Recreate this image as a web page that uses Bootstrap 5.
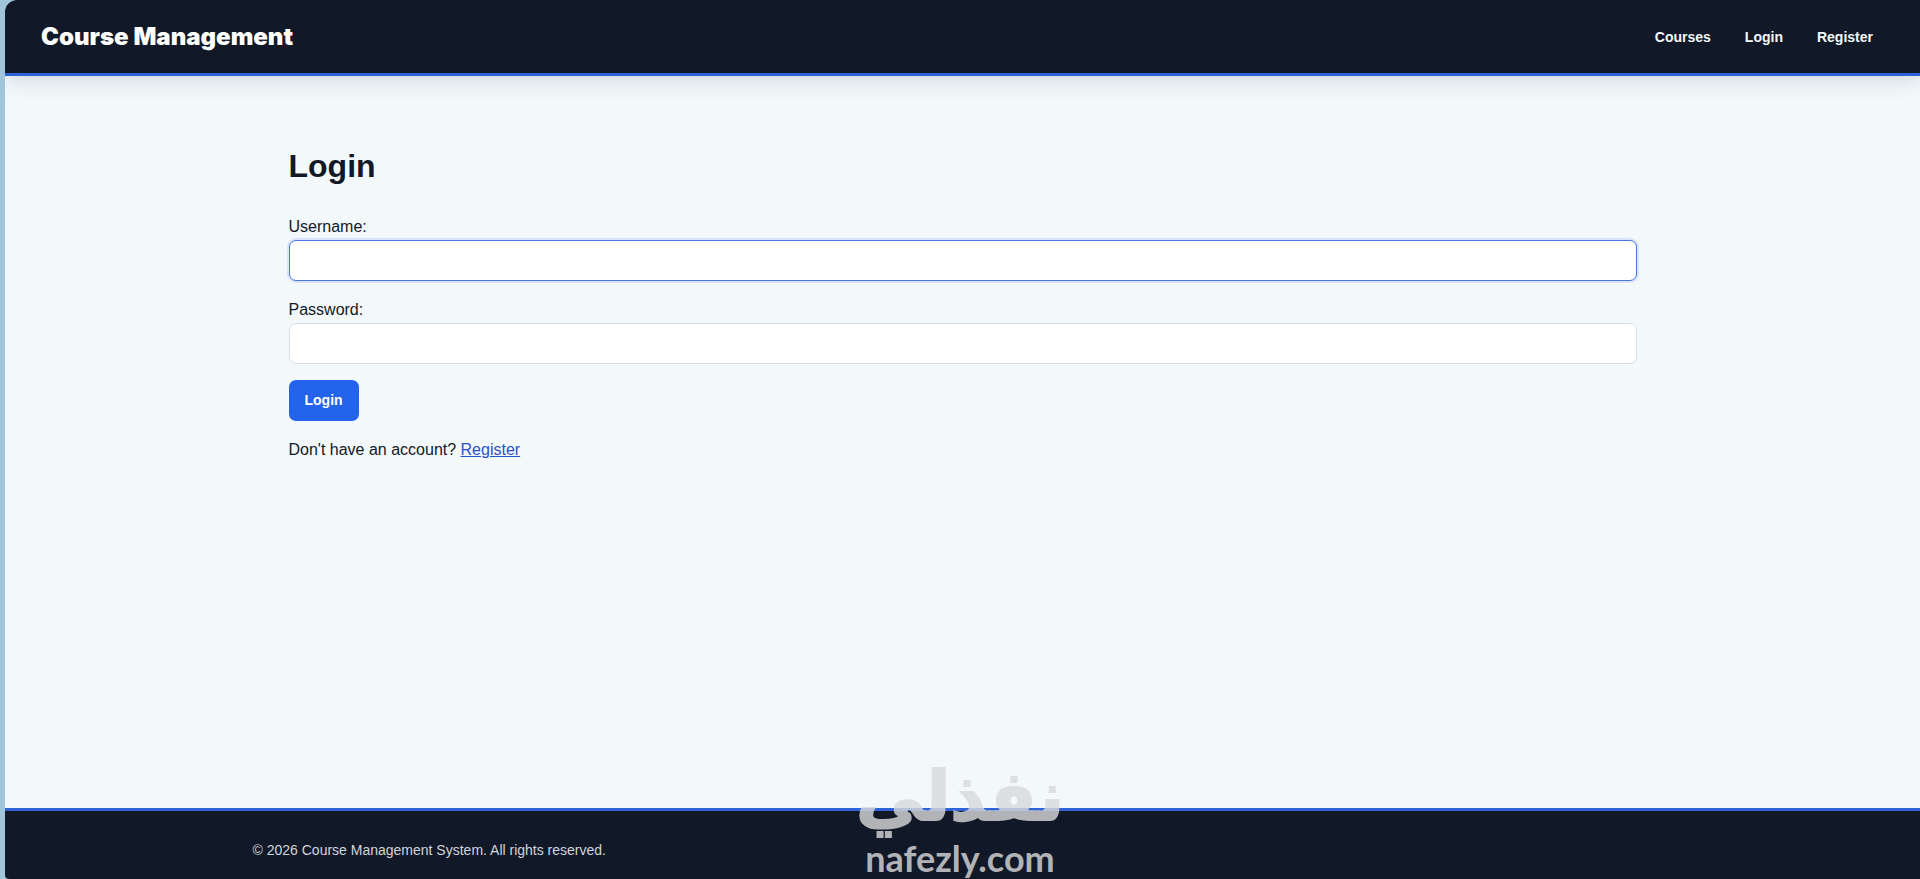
<!DOCTYPE html>
<html lang="en">
<head>
<meta charset="utf-8">
<meta name="viewport" content="width=device-width, initial-scale=1">
<title>Login - Course Management</title>
<link href="https://cdn.jsdelivr.net/npm/bootstrap@5.3.0/dist/css/bootstrap.min.css" rel="stylesheet">
<style>
body { font-family: "Liberation Sans", Arial, sans-serif; font-size: 16px; line-height: 26px; color: #111827; background: #a1c6dc; }
.app-window { min-height: 100vh; margin-left: 5px; background: #f3f8fb; border-radius: 12px 0 0 4px; overflow: hidden; }
.site-header { background: #111827; border-bottom: 3px solid #2f62d4; box-shadow: 0 4px 20px rgba(17, 24, 39, .15); padding: 0 36px; height: 76px; }
.site-brand { font-family: Inter, "Liberation Sans", sans-serif; font-weight: 900; font-size: 24px; line-height: 32px; color: #fff; }
.site-nav { gap: 12px; }
.site-nav .nav-link { font-size: 14px; font-weight: 700; line-height: 24px; color: #f3f8fc; padding: 0 11px; }
.page-box { width: 100%; max-width: 1420px; }
.login-area { padding: 68px 36px 48px; }
.login-title { font-size: 32px; line-height: 44px; font-weight: 700; margin-bottom: 26px; }
.login-field { margin-bottom: 16px; }
.login-field .form-control { height: 41px; border-radius: 7px; border-color: #d9dee5; }
.login-field .form-control.active-field { border-color: #4a78e0; box-shadow: 0 0 0 2px rgba(37, 99, 235, .12); }
.login-btn { font-size: 14px; font-weight: 700; line-height: 25px; padding: 8px 16px; border: 0; border-radius: 7px; background: #2463eb; color: #fff; }
.login-link { color: #2a52c8; }
.site-footer { background: #111827; border-top: 3px solid #2f62d4; padding: 28px 0 18px; font-size: 14px; line-height: 22px; color: #d1d5db; }
.watermark { bottom: 0; left: 0; right: 0; color: rgb(218, 218, 218); opacity: .8; pointer-events: none; }
.watermark-ar { font-family: "DejaVu Sans", sans-serif; font-weight: 700; font-size: 68px; line-height: 80px; -webkit-text-stroke: 2px currentColor; }
.watermark-lat { font-family: Lato, sans-serif; font-weight: 700; font-size: 36px; line-height: 42px; }
</style>
</head>
<body class="position-relative">
<div class="app-window d-flex flex-column">
  <header class="site-header d-flex align-items-center justify-content-between">
    <a class="site-brand text-decoration-none" href="#">Course Management</a>
    <nav class="site-nav nav flex-nowrap" aria-label="Main">
      <a class="nav-link" href="#">Courses</a>
      <a class="nav-link" href="#">Login</a>
      <a class="nav-link" href="#">Register</a>
    </nav>
  </header>
  <main class="page-box login-area flex-grow-1 mx-auto">
    <h1 class="login-title">Login</h1>
    <form>
      <div class="login-field">
        <label class="d-block" for="username">Username:</label>
        <input class="form-control active-field" type="text" id="username" name="username">
      </div>
      <div class="login-field">
        <label class="d-block" for="password">Password:</label>
        <input class="form-control" type="password" id="password" name="password">
      </div>
      <button class="btn login-btn" type="submit">Login</button>
    </form>
    <p class="mt-3 mb-0">Don't have an account? <a class="login-link" href="#">Register</a></p>
  </main>
  <footer class="site-footer">
    <div class="page-box mx-auto">© 2026 Course Management System. All rights reserved.</div>
  </footer>
</div>
<div class="watermark position-absolute text-center">
  <div class="watermark-ar" lang="ar" dir="rtl">نفذلي</div>
  <div class="watermark-lat">nafezly.com</div>
</div>
<script src="https://cdn.jsdelivr.net/npm/bootstrap@5.3.0/dist/js/bootstrap.bundle.min.js"></script>
</body>
</html>
